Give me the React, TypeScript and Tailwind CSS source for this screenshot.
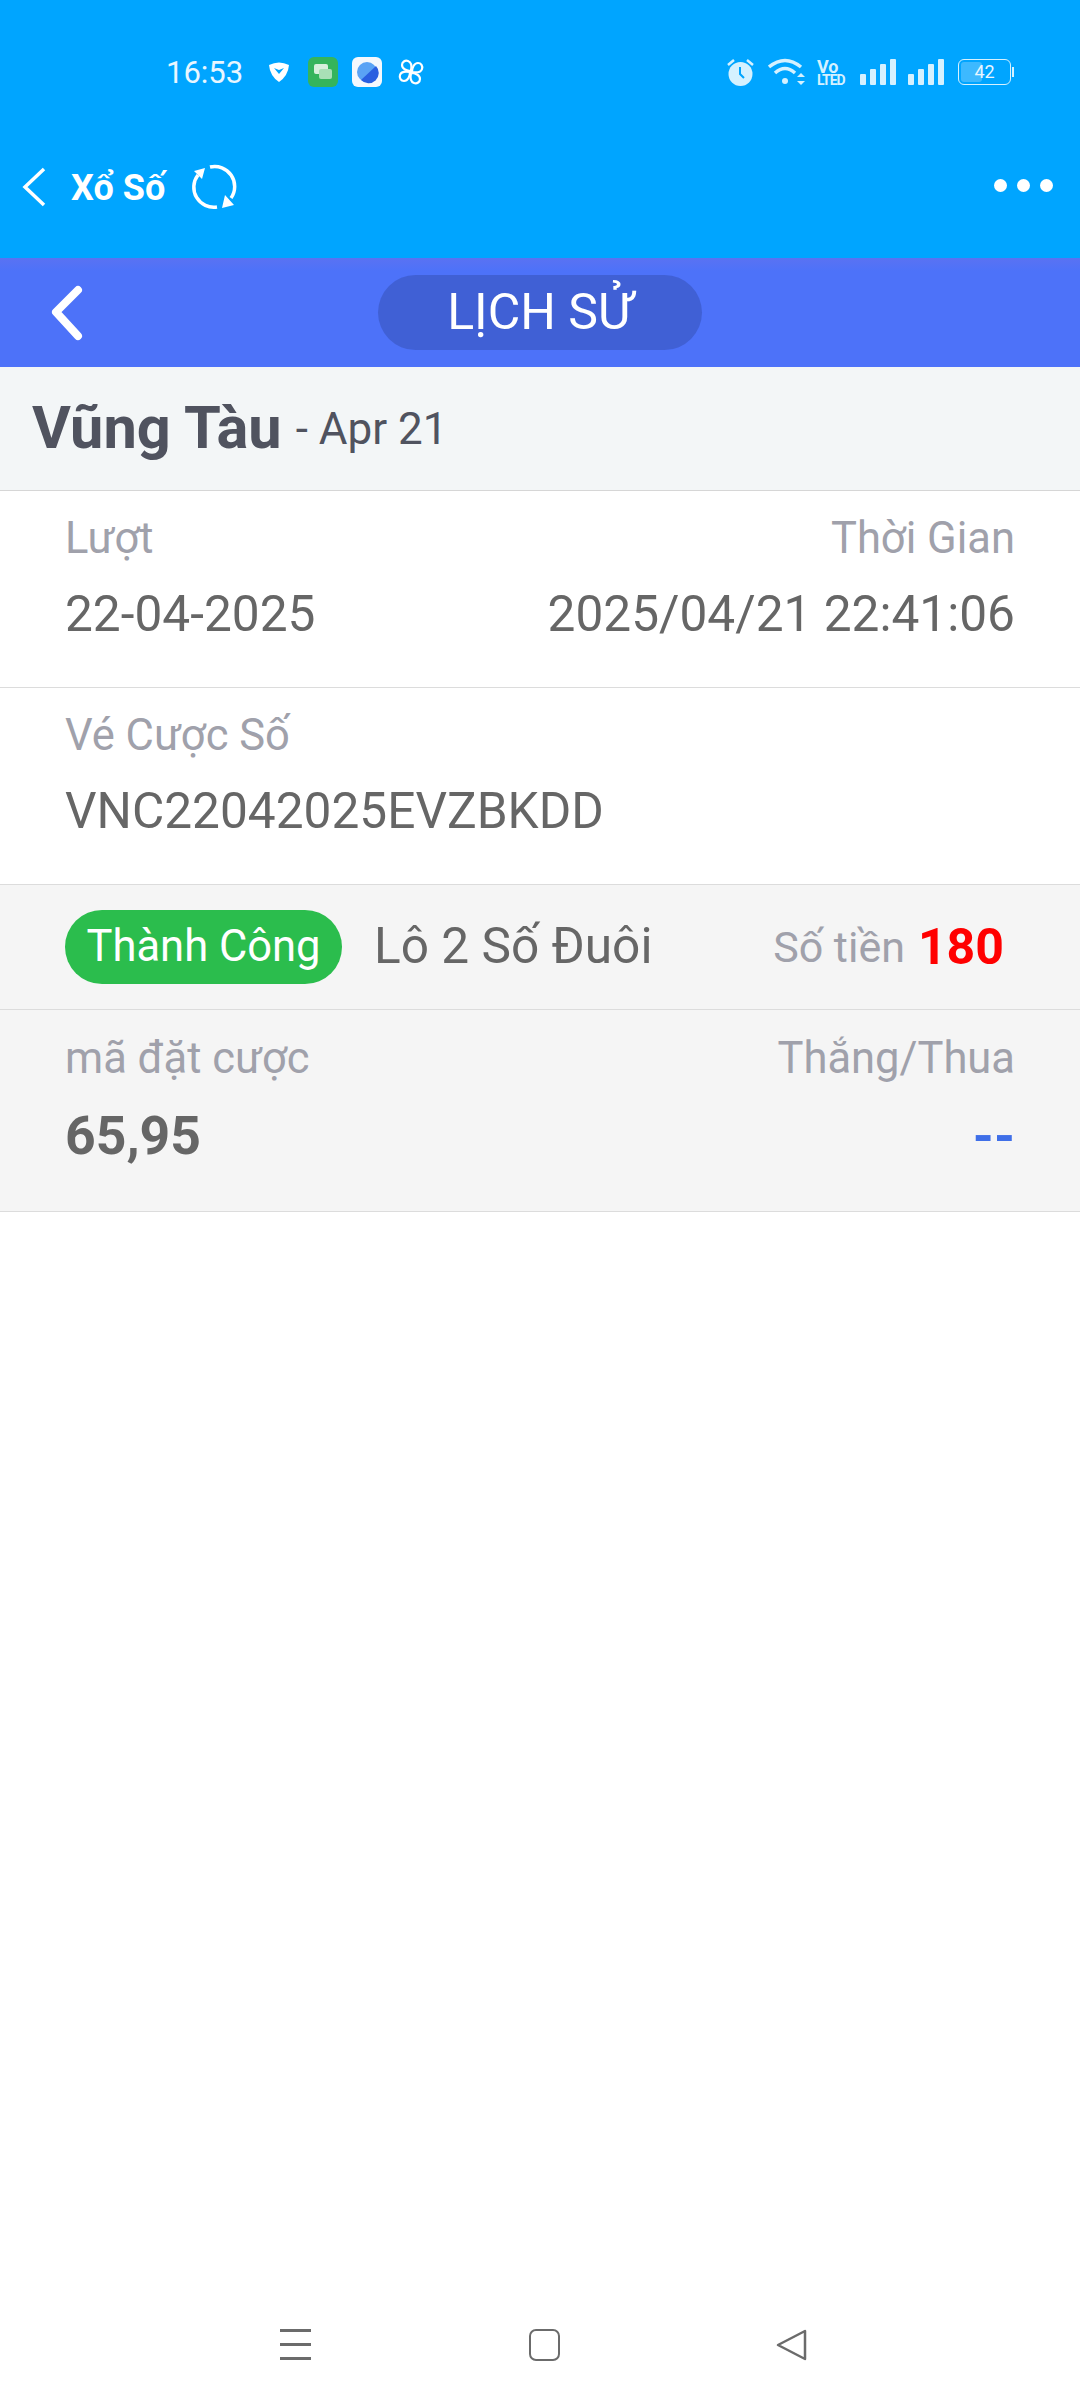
function Bars() {
  return (
    <svg width="36" height="26" viewBox="0 0 36 26" fill="#d5f1ff">
      <rect x="0" y="15" width="6" height="11" rx="1" />
      <rect x="10" y="10" width="6" height="16" rx="1" />
      <rect x="20" y="5" width="6" height="21" rx="1" />
      <rect x="30" y="0" width="6" height="26" rx="1" />
    </svg>
  )
}

function StatusBar() {
  return (
    <div className="flex h-[64px] items-center justify-between pl-[166px] pr-[66px]">
      <div className="flex items-center">
        <span className="text-[31px] leading-none text-[#e8f6ff]">16:53</span>
        <svg className="ml-[25px]" width="22" height="22" viewBox="0 0 22 22">
          <path d="M1 4 Q11 -1 21 4 Q20 15 11 21 Q2 15 1 4Z" fill="#fff" />
          <path d="M6 7 L11 13 L16 7 L11 9Z" fill="#00a5ff" />
        </svg>
        <svg className="ml-[18px]" width="30" height="30" viewBox="0 0 30 30">
          <rect width="30" height="30" rx="6" fill="#35b45c" />
          <rect x="6" y="7" width="14" height="10" rx="2" fill="#d6f0dc" />
          <rect x="11" y="12" width="13" height="10" rx="2" fill="#a8e0b6" />
        </svg>
        <svg className="ml-[14px]" width="30" height="30" viewBox="0 0 30 30">
          <rect width="30" height="30" rx="6" fill="#f4f8fd" />
          <circle cx="15" cy="15" r="10" fill="#5aa3f5" />
          <path d="M24 9 A10 10 0 0 1 9 23Z" fill="#2a5fe0" />
        </svg>
        <svg className="ml-[15px]" width="28" height="28" viewBox="0 0 28 28" fill="none" stroke="#fff" strokeWidth="2.2" strokeLinejoin="round">
          <path d="M14 13 C10 13 5 11 5 7 C5 4 8 2 11 3 C14 4 15 8 14 13Z" />
          <path d="M14 13 C10 13 5 11 5 7 C5 4 8 2 11 3 C14 4 15 8 14 13Z" transform="rotate(90 14 14)" />
          <path d="M14 13 C10 13 5 11 5 7 C5 4 8 2 11 3 C14 4 15 8 14 13Z" transform="rotate(180 14 14)" />
          <path d="M14 13 C10 13 5 11 5 7 C5 4 8 2 11 3 C14 4 15 8 14 13Z" transform="rotate(270 14 14)" />
        </svg>
      </div>
      <div className="flex items-center">
        <svg width="27" height="30" viewBox="0 0 27 30" fill="#d5f1ff">
          <circle cx="13.5" cy="17" r="12" />
          <path d="M13 10 V17 L17 21" stroke="#00a5ff" strokeWidth="2" fill="none" />
          <path d="M1 8 L7 3 M26 8 L20 3" stroke="#d5f1ff" strokeWidth="2.5" />
        </svg>
        <svg className="ml-[14px]" width="37" height="30" viewBox="0 0 37 30" fill="none" stroke="#d5f1ff" strokeWidth="3.5">
          <path d="M1 10 Q17 -3 33 10" />
          <path d="M7 16 Q17 7 27 16" />
          <circle cx="17" cy="24" r="3" fill="#d5f1ff" stroke="none" />
          <path d="M29 20 L33 16 L37 20Z M29 24 L33 28 L37 24Z" fill="#d5f1ff" stroke="none" />
        </svg>
        <div className="ml-[12px] flex w-[31px] flex-col font-bold text-[#d5f1ff]">
          <span className="text-[18px] leading-[15px]">Vo</span>
          <span className="text-[14px] leading-[12px] tracking-[-1px]">LTED</span>
        </div>
        <div className="ml-[12px]"><Bars /></div>
        <div className="ml-[12px]"><Bars /></div>
        <div className="ml-[14px] flex items-center">
          <div className="relative flex h-[26px] w-[53px] items-center justify-center rounded-[6px] border-[1.5px] border-[#d5f1ff]">
            <div className="absolute bottom-[2px] left-[2px] top-[2px] w-[42%] rounded-[3px] bg-[#3db9ff]" />
            <span className="relative text-[18px] leading-none text-[#e8f6ff]">42</span>
          </div>
          <div className="ml-[1px] h-[10px] w-[2px] bg-[#d5f1ff]" />
        </div>
      </div>
    </div>
  )
}

function AppBar() {
  return (
    <div className="flex h-[258px] flex-col bg-[#00a5ff] pt-[40px]">
      <StatusBar />
      <div className="mt-[38px] flex h-[90px] items-center justify-between pl-[22px] pr-[27px]">
        <div className="flex items-center">
          <svg width="24" height="40" viewBox="0 0 24 40" fill="none" stroke="#fff" strokeWidth="3.5">
            <path d="M22 2 L3 20 L22 38" />
          </svg>
          <span className="ml-[25px] mt-[2px] text-[36px] font-bold leading-none text-white">Xổ Số</span>
          <svg className="ml-[26px]" width="46" height="46" viewBox="0 0 46 46" fill="none" stroke="#fff" strokeWidth="3.5">
            <path d="M19 3 A20 20 0 0 1 40 34" />
            <path d="M26 43 A20 20 0 0 1 7 11" />
            <path d="M31 44 L43 41 L34 31Z M3 7 L14 4 L11 15Z" fill="#fff" stroke="none" />
          </svg>
        </div>
        <div className="mb-[4px] flex gap-[10px]">
          <div className="h-[13px] w-[13px] rounded-full bg-white" />
          <div className="h-[13px] w-[13px] rounded-full bg-white" />
          <div className="h-[13px] w-[13px] rounded-full bg-white" />
        </div>
      </div>
    </div>
  )
}

function Row({ children, className }: { children: React.ReactNode; className?: string }) {
  return <div className={`border-b-[1.5px] border-[#dcdcdc] px-[65px] ${className ?? ''}`}>{children}</div>
}

export default function App() {
  return (
    <div className="flex h-[2400px] w-[1080px] flex-col overflow-hidden bg-white font-['Roboto',sans-serif]">
      <AppBar />
      <div className="relative flex h-[109px] items-center justify-center bg-[linear-gradient(180deg,#5a72f2,#4d72f9_12%)]">
        <svg className="absolute left-[48px] top-[26px]" width="38" height="60" viewBox="0 0 38 60" fill="none" stroke="#fff" strokeWidth="8" strokeLinecap="round" strokeLinejoin="round">
          <path d="M30 6 L8 28 L30 52" />
        </svg>
        <div className="flex h-[75px] w-[324px] items-center justify-center rounded-full bg-[#4060d5] text-[50px] text-white">
          LỊCH SỬ
        </div>
      </div>
      <div className="flex h-[124px] items-center border-b-[1.5px] border-[#d6d6d6] bg-[#f3f6f7] pl-[32px]">
        <span className="text-[59.5px] font-bold leading-none text-[#50535f]">Vũng Tàu</span>
        <span className="ml-[14px] text-[44px] leading-none text-[#50535f]">- Apr 21</span>
      </div>
      <Row className="h-[197px] pt-[24px]">
        <div className="flex justify-between text-[43.5px] leading-[48px] text-[#a0a1ab]">
          <span>Lượt</span>
          <span>Thời Gian</span>
        </div>
        <div className="mt-[23px] flex justify-between text-[49.6px] leading-[56px] text-[#666666]">
          <span>22-04-2025</span>
          <span>2025/04/21 22:41:06</span>
        </div>
      </Row>
      <Row className="h-[197px] pt-[24px]">
        <div className="text-[43.5px] leading-[48px] text-[#a0a1ab]">Vé Cược Số</div>
        <div className="mt-[23px] text-[49.6px] leading-[56px] text-[#666666]">VNC22042025EVZBKDD</div>
      </Row>
      <Row className="flex h-[125px] items-center bg-[#f5f5f5] pr-[76px]">
        <span className="flex h-[74px] w-[277px] items-center justify-center rounded-full bg-[#2bbd4d] text-[43.5px] text-white">
          Thành Công
        </span>
        <span className="ml-[32px] text-[49.6px] leading-none text-[#666666]">Lô 2 Số Đuôi</span>
        <span className="ml-auto text-[43px] leading-none text-[#a0a1ab]">Số tiền</span>
        <span className="ml-[13px] text-[50px] font-bold leading-none text-[#ff0000]">180</span>
      </Row>
      <Row className="h-[202px] bg-[#f5f5f5] pt-[25px]">
        <div className="flex justify-between text-[43.5px] leading-[48px] text-[#a0a1ab]">
          <span>mã đặt cược</span>
          <span>Thắng/Thua</span>
        </div>
        <div className="mt-[25px] flex justify-between text-[53.5px] leading-[56px]">
          <span className="font-bold text-[#666666]">65,95</span>
          <span className="font-bold text-[#3f6fe8]">--</span>
        </div>
      </Row>
      <div className="flex-1" />
      <div className="flex h-[126px] items-start pl-[280px] pt-[55px]">
        <div className="flex h-[31px] w-[31px] flex-col justify-between">
          <div className="h-[3px] bg-[#6b6b6b]" />
          <div className="h-[3px] bg-[#6b6b6b]" />
          <div className="h-[3px] bg-[#6b6b6b]" />
        </div>
        <div className="ml-[218px] h-[32px] w-[31px] rounded-[7px] border-[2.5px] border-[#6b6b6b]" />
        <svg className="ml-[216px]" width="31" height="32" viewBox="0 0 31 32" fill="none" stroke="#6b6b6b" strokeWidth="2.5" strokeLinejoin="round">
          <path d="M29 2 V30 L2 16Z" />
        </svg>
      </div>
    </div>
  )
}
